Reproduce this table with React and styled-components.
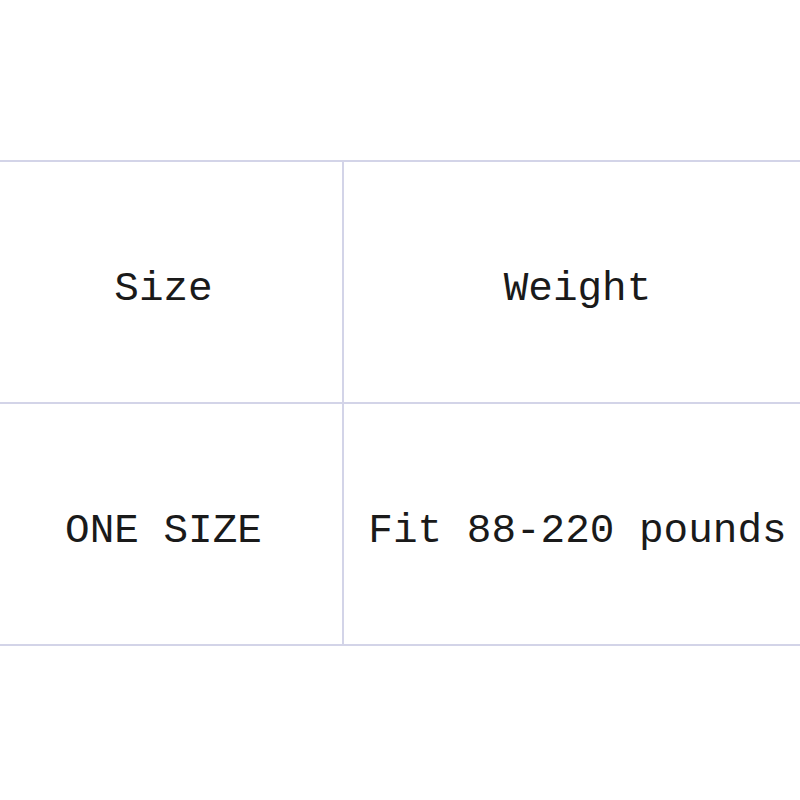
import React from "react";
import styled, { createGlobalStyle } from "styled-components";

const GlobalStyle = createGlobalStyle`
  body {
    margin: 0;
    background: #ffffff;
  }
`;

const Page = styled.div`
  width: 800px;
  height: 800px;
  overflow: hidden;
  padding-top: 160px;
  box-sizing: border-box;
`;

const Table = styled.table`
  border-collapse: collapse;
  table-layout: fixed;
  margin-left: -17px;
  width: 824px;
  font-family: "Liberation Mono", "DejaVu Sans Mono", monospace;
  font-size: 41px;
  color: #1a1a1a;
`;

const Cell = styled.td`
  border: 2px solid #d3d4e8;
  height: 226px;
  padding: 14px 0 0;
  text-align: center;
  vertical-align: middle;
  width: ${(p) => p.$width}px;
`;

const rows = [
  ["Size", "Weight"],
  ["ONE SIZE", "Fit 88-220 pounds"],
];

export default function App() {
  return (
    <>
      <GlobalStyle />
      <Page>
        <Table>
          <tbody>
            {rows.map((r) => (
              <tr key={r[0]}>
                <Cell $width={357}>{r[0]}</Cell>
                <Cell $width={467}>{r[1]}</Cell>
              </tr>
            ))}
          </tbody>
        </Table>
      </Page>
    </>
  );
}
